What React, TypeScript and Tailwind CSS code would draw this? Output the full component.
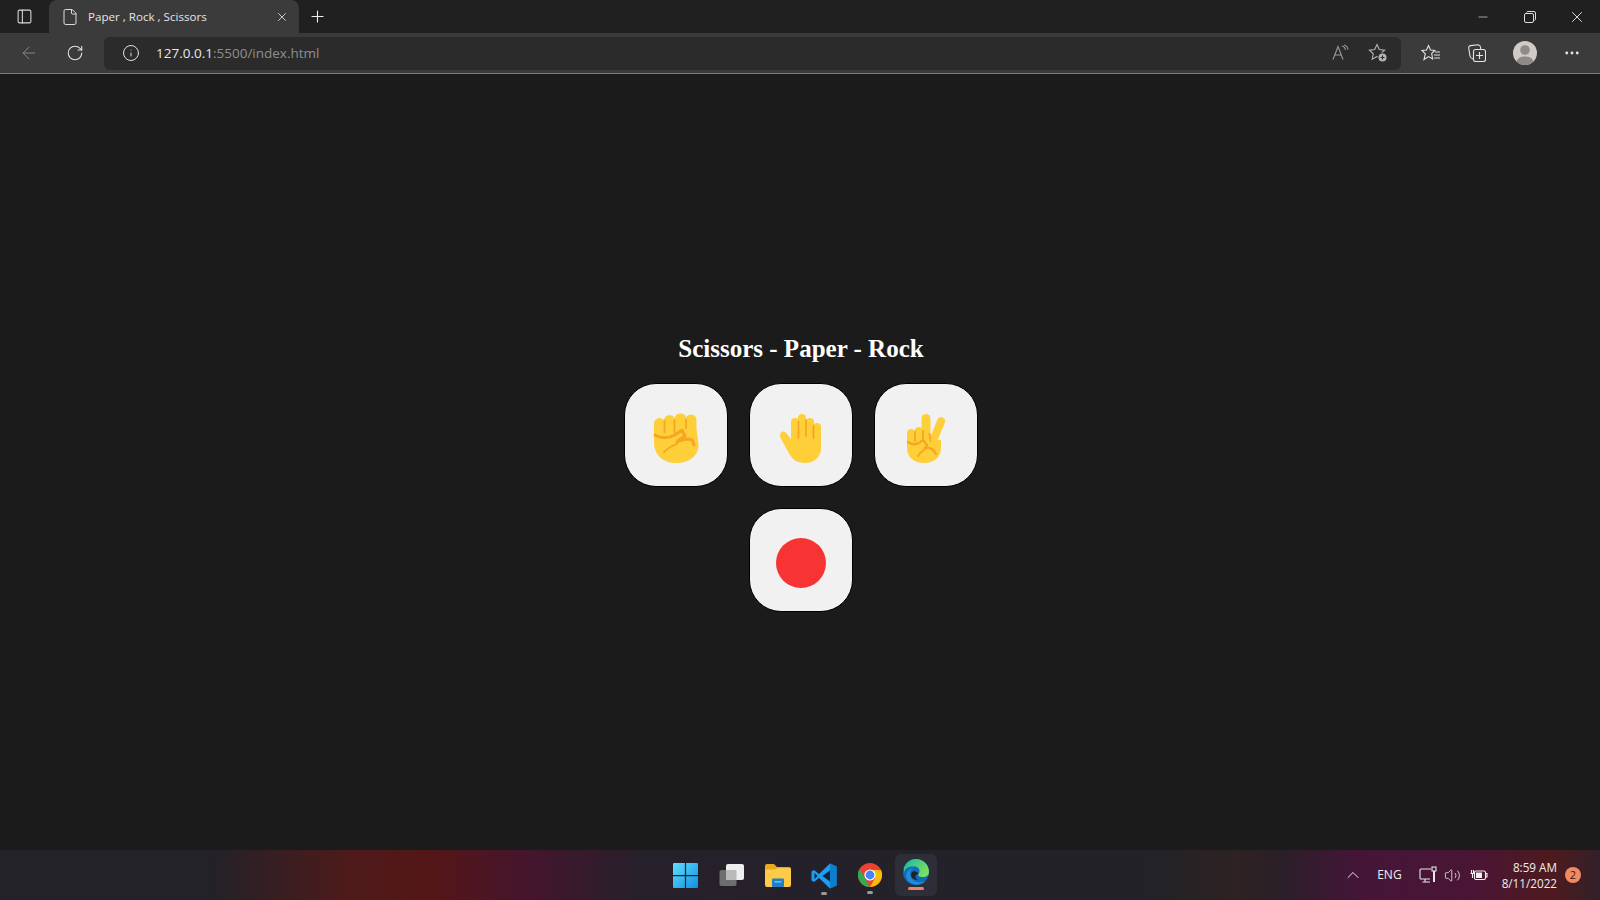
import { Plus, X, Minus, ArrowLeft, RotateCw, Info, ChevronUp, MoreHorizontal, File, PanelLeft, Volume2 } from "lucide-react";

function Fist() {
  return (
    <svg viewBox="0 0 102 102" className="w-full h-full">
      <g fill="#ffcf3a">
        <rect x="29" y="34" width="11" height="24" rx="5.5" />
        <rect x="39" y="31" width="11" height="24" rx="5.5" />
        <rect x="49.5" y="29.5" width="12" height="24" rx="5.5" />
        <rect x="60.5" y="30.5" width="11" height="28" rx="5.5" />
        <path d="M29 46 H71.5 L73.5 60 C74 72 64 79 51 79 C38 79 29 71 29 58 Z" />
      </g>
      <g fill="none" stroke="#f5a623" strokeLinecap="round" strokeLinejoin="round">
        <path d="M39.5 37 V48 M49.5 36 V49 M61 36 V44" strokeWidth="1.8" />
        <path d="M30 51 C36 55 44 54 50 51 L57 46 L60 52 C56 54 53 56 52 58 C60 54 67 54 68 58 L69 61" strokeWidth="3" />
        <path d="M52 60 C46 62 42 65 39 68" strokeWidth="1.8" />
      </g>
    </svg>
  );
}

function Hand() {
  return (
    <svg viewBox="0 0 102 102" className="w-full h-full">
      <g fill="#ffcf3a">
        <rect x="41" y="34" width="8" height="30" rx="4" />
        <rect x="48" y="30" width="8" height="30" rx="4" />
        <rect x="56" y="34" width="8" height="30" rx="4" />
        <rect x="63" y="39" width="8" height="30" rx="4" />
        <path d="M31.5 48 C34 47 35.5 48 37 50 L41 55 L71 55 V64 C71 73 64 79 55 79 C48 79 43 76 40 71 L31 55 C29.5 52 29.5 49.5 31.5 48 Z" />
      </g>
      <path d="M48.5 38 V54 M56 36 V52 M63.5 42 V54" fill="none" stroke="#f5a623" strokeWidth="1.8" strokeLinecap="round" />
    </svg>
  );
}

function Peace() {
  return (
    <svg viewBox="0 0 102 102" className="w-full h-full">
      <g fill="#ffcf3a">
        <rect x="46.5" y="30" width="9" height="34" rx="4.5" />
        <rect x="58.5" y="32.5" width="8" height="28" rx="4" transform="rotate(22 62.5 46)" />
        <rect x="32" y="45" width="8.5" height="22" rx="4.25" />
        <rect x="39.5" y="43" width="8.5" height="24" rx="4.25" />
        <path d="M32 56 H66 V64 C66 73 59 79 49 79 C39 79 32 73 32 64 Z" />
      </g>
      <g fill="none" stroke="#f5a623" strokeLinecap="round" strokeLinejoin="round">
        <path d="M40 48 V57 M48 47 V55" strokeWidth="1.8" />
        <path d="M33 58 C38 62 44 60 48 56 L52 61 L50 64 C55 63 59 66 61 70" strokeWidth="2.4" />
        <path d="M50 65 C46 68 44 70 43 72" strokeWidth="1.8" />
        <path d="M54.5 50 L55.5 57" strokeWidth="1.8" />
      </g>
    </svg>
  );
}

function Tile({ children }: { children?: React.ReactNode }) {
  return (
    <div className="w-[104px] h-[104px] box-border rounded-[32px] bg-[#f1f1f1] border border-black flex items-center justify-center overflow-hidden">
      {children}
    </div>
  );
}

function WindowsLogo() {
  return (
    <svg viewBox="0 0 24 24" className="w-[25px] h-[25px]">
      <defs>
        <linearGradient id="win" x1="0" y1="0" x2="1" y2="1">
          <stop offset="0" stopColor="#5fe0ff" />
          <stop offset="1" stopColor="#0f8fe0" />
        </linearGradient>
      </defs>
      <path fill="url(#win)" d="M0 1a1 1 0 0 1 1-1h10.4v11.4H0z M12.6 0H23a1 1 0 0 1 1 1v10.4H12.6z M0 12.6h11.4V24H1a1 1 0 0 1-1-1z M12.6 12.6H24V23a1 1 0 0 1-1 1H12.6z" />
    </svg>
  );
}

function TaskView() {
  return (
    <svg viewBox="0 0 26 24" className="w-[26px] h-[24px]">
      <rect x="0.5" y="7" width="17" height="16" rx="2" fill="#6e6e6e" />
      <rect x="7" y="1" width="18" height="16" rx="2" fill="#eeeeee" />
      <rect x="7" y="7" width="10.5" height="10" fill="#b9b9b9" />
    </svg>
  );
}

function Explorer() {
  return (
    <svg viewBox="0 0 26 24" className="w-[26px] h-[24px]">
      <path d="M0 3a2 2 0 0 1 2-2h7l3 3h12a2 2 0 0 1 2 2v3H0z" fill="#e8a91c" />
      <path d="M0 6.5h10l3-1.5h11a2 2 0 0 1 2 2v15a2 2 0 0 1-2 2H2a2 2 0 0 1-2-2z" fill="#fdcb47" />
      <rect x="7" y="15.5" width="12" height="8.5" rx="1" fill="#1f7fc9" />
      <rect x="9.5" y="18" width="7" height="1.6" fill="#67c0f2" />
    </svg>
  );
}

function VSCode() {
  return (
    <svg viewBox="0 0 26 26" className="w-[26px] h-[26px]">
      <path d="M19 0.5 L25.5 3.5 V22.5 L19 25.5 L8 15 L3 19 L0.5 17.5 V8.5 L3 7 L8 11 Z" fill="#1f9cf0" />
      <path d="M19 0.5 L25.5 3.5 V22.5 L19 25.5 Z" fill="#0a7fd0" />
      <path d="M19 7.5 L11.5 13 L19 18.5 Z M3.5 10 L6.5 13 L3.5 16 Z" fill="#10233a" />
    </svg>
  );
}

function Chrome() {
  return (
    <svg viewBox="0 0 24 24" className="w-[24px] h-[24px]">
      <circle cx="12" cy="12" r="12" fill="#ea4335" />
      <path d="M1.6 6 L7 15 L12 24 A12 12 0 0 1 1.6 6 Z" fill="#34a853" />
      <path d="M12 24 L17.2 15 L12 7 H23 A12 12 0 0 1 12 24 Z" fill="#fbbc05" />
      <circle cx="12" cy="12" r="5.6" fill="#fff" />
      <circle cx="12" cy="12" r="4.4" fill="#4285f4" />
    </svg>
  );
}

function Edge() {
  return (
    <svg viewBox="0 0 26 26" className="w-[26px] h-[26px]">
      <defs>
        <linearGradient id="edgeA" x1="0" y1="0" x2="1" y2="0.6">
          <stop offset="0" stopColor="#14b8a6" />
          <stop offset="1" stopColor="#7fe05a" />
        </linearGradient>
      </defs>
      <circle cx="13" cy="13" r="13" fill="#0f6cbd" />
      <path d="M1 9 C3 3 8 0 13 0 C20 0 26 5.5 26 13 C26 16 23.5 18 20 18 C16 18 14.5 16.5 15.5 15 C18 12 16 8 12 7.5 C7 7 3 8 1 13 Z" fill="url(#edgeA)" />
      <path d="M11 9 C7 10 6 15 8 19 C10 23 17 25 22 22 C19 27 8 27 4 20 C2 15 5 9 11 9 Z" fill="#1f8fdc" />
      <path d="M15.5 15 C14 12 10 11 8.5 14 C7 18 10 21 15 21 C12 19 11 16 15.5 15 Z" fill="#20202a" />
    </svg>
  );
}

export default function App() {
  return (
    <div className="h-screen w-full flex flex-col overflow-hidden bg-[#1b1b1b] font-['Open_Sans','Liberation_Sans',sans-serif]">
      {/* Tab strip */}
      <div className="h-[33px] flex items-end bg-[#202020] text-white shrink-0">
        <div className="w-[49px] h-[33px] flex items-center justify-center">
          <PanelLeft size={17} strokeWidth={1.5} color="#d8d8d8" />
        </div>
        <div className="w-[250px] h-[33px] bg-[#3b3b3b] rounded-t-lg flex items-center pl-[12px] pr-[10px]">
          <File size={18} strokeWidth={1.3} color="#e0e0e0" />
          <span className="ml-[9px] text-[11.6px] text-[#e4e4e4] flex-1">Paper , Rock , Scissors</span>
          <X size={14} strokeWidth={1.5} color="#dddddd" />
        </div>
        <div className="w-[36px] h-[33px] flex items-center justify-center">
          <Plus size={19} strokeWidth={1.4} color="#eeeeee" />
        </div>
        <div className="flex-1" />
        <div className="w-[47px] h-[33px] flex items-center justify-center">
          <Minus size={14} strokeWidth={1.2} color="#dddddd" />
        </div>
        <div className="w-[48px] h-[33px] pr-[1px] flex items-center justify-center">
          <svg viewBox="0 0 12 12" className="w-[12px] h-[12px]" fill="none" stroke="#dddddd" strokeWidth="1">
            <rect x="0.5" y="2.5" width="9" height="9" rx="1.5" />
            <path d="M2.5 1.5 Q3 0.5 4 0.5 H10 Q11.5 0.5 11.5 2 V8 Q11.5 9 10.5 9.5" />
          </svg>
        </div>
        <div className="w-[46px] h-[33px] flex items-center justify-center">
          <X size={18} strokeWidth={1.2} color="#eeeeee" />
        </div>
      </div>

      {/* Toolbar */}
      <div className="h-[41px] flex items-center bg-[#3b3b3b] border-b border-[#7a7a7a] shrink-0">
        <div className="w-[57px] flex justify-center pl-[1px]">
          <ArrowLeft size={20} strokeWidth={1.2} color="#858585" />
        </div>
        <div className="w-[47px] flex justify-center pr-[11px]">
          <RotateCw size={18} strokeWidth={1.4} color="#e4e4e4" />
        </div>
        <div className="w-[1297px] h-[33px] rounded-md bg-[#2b2b2b] flex items-center pl-[18px]">
          <Info size={18} strokeWidth={1.3} color="#e4e4e4" />
          <span className="ml-[16px] text-[13.5px] text-[#e8e8e8]">
            127.0.0.1<span className="text-[#8f8f8f]">:5500/index.html</span>
          </span>
          <div className="flex-1" />
          <svg viewBox="0 0 18 18" className="w-[18px] h-[18px] mr-[19px]" fill="none" stroke="#9a9a9a" strokeWidth="1.1">
            <path d="M2 15.5 L7 2.5 L12 15.5 M3.8 11 H10.2" />
            <path d="M11 2 Q14 2.5 14.5 6 M13 1 Q16.5 2 17 5.5" />
          </svg>
          <svg viewBox="0 0 20 20" className="w-[20px] h-[20px] mr-[13px]" fill="none" stroke="#b5b5b5" strokeWidth="1.1">
            <path d="M9 1.5 L11.3 6.5 L16.6 7.1 L12.7 10.8 L13.8 16.2 L9 13.5 L4.2 16.2 L5.3 10.8 L1.4 7.1 L6.7 6.5 Z" />
            <circle cx="14.5" cy="14.5" r="5" fill="#2b2b2b" stroke="none" />
            <circle cx="14.5" cy="14.5" r="4" fill="#b5b5b5" stroke="none" />
            <path d="M14.5 12.5 V16.5 M12.5 14.5 H16.5" stroke="#2b2b2b" />
          </svg>
        </div>
        <div className="w-[58px] flex justify-center pl-[1px]">
          <svg viewBox="0 0 20 18" className="w-[20px] h-[18px]" fill="none" stroke="#e4e4e4" strokeWidth="1.1">
            <path d="M7.5 1.5 L9.5 6 L13.8 6.5 L10.7 9.5 L11.6 15 L7.5 12.6 L3 15.5 L4.3 9.8 L1 6.5 L5.5 6 Z" />
            <path d="M14 8 H19 M13 11 H19 M13 14 H19" />
          </svg>
        </div>
        <div className="w-[35px] flex justify-center">
          <svg viewBox="0 0 18 18" className="w-[18px] h-[18px]" fill="none" stroke="#e4e4e4" strokeWidth="1.1">
            <path d="M5 15 Q2.5 14.5 2 12 L0.7 4 Q0.5 2 2.5 1.6 L10 0.7 Q12 0.7 12.5 3 L12.7 5" />
            <rect x="5.5" y="5.5" width="12" height="12" rx="2" />
            <path d="M11.5 8 V15 M8 11.5 H15" />
          </svg>
        </div>
        <div className="w-[61px] flex justify-center">
          <svg viewBox="0 0 24 24" className="w-[24px] h-[24px]">
            <circle cx="12" cy="12" r="12" fill="#cfcbc8" />
            <circle cx="12" cy="9" r="4.8" fill="#8e8a88" />
            <path d="M3.5 20.5 C5 16.5 8 15.5 12 15.5 C16 15.5 19 16.5 20.5 20.5 A12 12 0 0 1 3.5 20.5 Z" fill="#8e8a88" />
          </svg>
        </div>
        <div className="w-[34px] flex justify-center">
          <MoreHorizontal size={18} strokeWidth={1.8} color="#e4e4e4" />
        </div>
      </div>

      {/* Game */}
      <main className="flex-1 flex flex-col items-center pt-[260px] pl-[2px] bg-[#1b1b1b]">
        <h1 className="font-['Liberation_Serif',serif] font-bold text-[25px] leading-[30px] text-white">
          Scissors - Paper - Rock
        </h1>
        <div className="grid grid-cols-3 gap-[21px] mt-[19px]">
          <Tile><Fist /></Tile>
          <Tile><Hand /></Tile>
          <Tile><Peace /></Tile>
          <div />
          <Tile>
            <div className="w-[50px] h-[50px] rounded-full bg-[#f73333] mt-[6px]" />
          </Tile>
        </div>
      </main>

      {/* Taskbar */}
      <div className="h-[50px] shrink-0 grid grid-cols-[1fr_auto_1fr] items-center bg-[linear-gradient(90deg,#222228_0%,#222228_13%,#4f1a1a_22%,#541616_27%,#45152e_33%,#26202a_40%,#222228_72%,#2e2222_77%,#2a1f28_80%,#451538_85%,#4a1535_92%,#4d1a1e_97%,#33202a_100%)]">
        <div />
        <div className="flex items-center pr-[1px]">
          <div className="w-[46px] flex justify-center"><WindowsLogo /></div>
          <div className="w-[46px] flex justify-center"><TaskView /></div>
          <div className="w-[46px] flex justify-center"><Explorer /></div>
          <div className="w-[46px] flex flex-col items-center gap-[3px] pt-[7px]">
            <VSCode />
            <div className="w-[6px] h-[3px] rounded-full bg-[#9a9a9a]" />
          </div>
          <div className="w-[46px] flex flex-col items-center gap-[4px] pt-[7px]">
            <Chrome />
            <div className="w-[6px] h-[3px] rounded-full bg-[#9a9a9a]" />
          </div>
          <div className="w-[42px] h-[42px] ml-[2px] rounded-md bg-[#2e2e38] flex flex-col items-center pt-[5px] gap-[2px]">
            <Edge />
            <div className="w-[16px] h-[3px] rounded-full bg-[#ef8070]" />
          </div>
        </div>
        <div className="flex items-center justify-end text-white pr-[19px]">
          <ChevronUp size={20} strokeWidth={1.2} color="#e6e6e6" />
          <span className="ml-[14px] text-[12px] text-[#eeeeee]">ENG</span>
          <svg viewBox="0 0 18 18" className="w-[18px] h-[18px] ml-[17px]" fill="none" stroke="#e6e6e6" strokeWidth="1.1">
            <path d="M12 3 H2 Q1 3 1 4 V12 Q1 13 2 13 H11 M6 13 V16 M3.5 16 H11" />
            <rect x="13" y="1" width="4" height="4" />
            <path d="M15 5 V16" strokeWidth="2" />
          </svg>
          <Volume2 size={17} strokeWidth={1.2} color="#e6e6e6" className="ml-[7px]" />
          <svg viewBox="0 0 18 14" className="w-[18px] h-[14px] ml-[9px]" fill="none" stroke="#f0f0f0" strokeWidth="1.1">
            <rect x="4.5" y="3" width="11" height="8.5" rx="1.5" />
            <rect x="6" y="4.5" width="6" height="5.5" fill="#f0f0f0" stroke="none" />
            <path d="M16 5.5 H17 V9 H16" />
            <path d="M0.5 5.5 H4.5 M1.5 2 V5.5 M3.5 2 V5.5 M2.5 6 V10" />
          </svg>
          <div className="ml-[14px] flex flex-col items-end text-[11.7px] leading-[16px] text-[#eeeeee]">
            <span>8:59 AM</span>
            <span>8/11/2022</span>
          </div>
          <div className="ml-[8px] w-[16px] h-[16px] rounded-full bg-[#ef8a62] flex items-center justify-center text-[11px] text-[#3a1a14]">
            2
          </div>
        </div>
      </div>
    </div>
  );
}
